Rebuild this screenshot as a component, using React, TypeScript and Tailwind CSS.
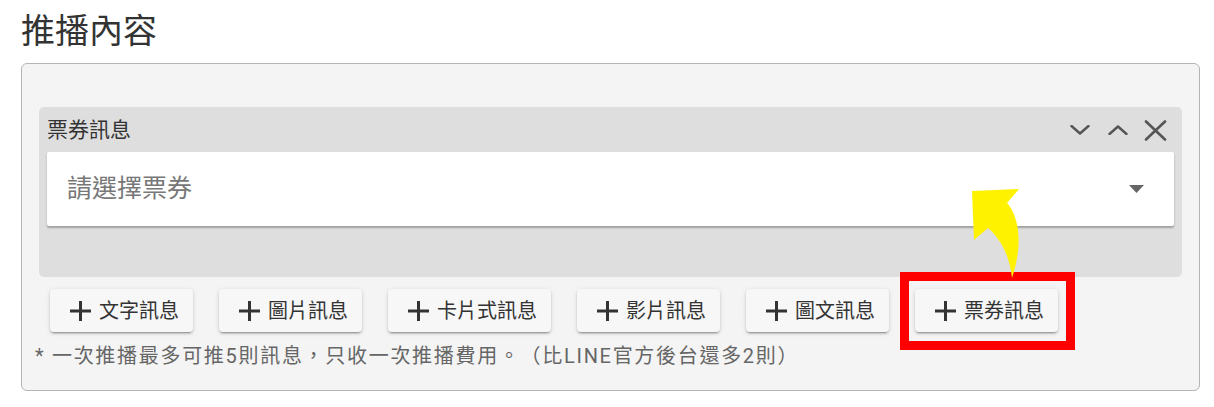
import { ReactNode } from 'react';

const font = "font-['Roboto','Noto_Sans_CJK_TC',sans-serif]";

function ChevronIcon({ up }: { up?: boolean }) {
    return (
        <svg width="20" height="10" viewBox="0 0 20 10" fill="none" stroke="#555" strokeWidth="2.4" strokeLinecap="round" strokeLinejoin="round">
            {up ? <polyline points="1.5,9 10,1.5 18.5,9" /> : <polyline points="1.5,1 10,8.5 18.5,1" />}
        </svg>
    );
}

function CloseIcon() {
    return (
        <svg width="23" height="21" viewBox="0 0 23 21" fill="none" stroke="#555" strokeWidth="2.6" strokeLinecap="round">
            <line x1="2" y1="1.5" x2="21" y2="19.5" />
            <line x1="21" y1="1.5" x2="2" y2="19.5" />
        </svg>
    );
}

function PlusIcon() {
    return (
        <svg width="21" height="20" viewBox="0 0 21 20" fill="none" stroke="#333" strokeWidth="3">
            <line x1="0" y1="10" x2="21" y2="10" />
            <line x1="10.5" y1="0" x2="10.5" y2="20" />
        </svg>
    );
}

function AddButton({ label, highlight }: { label: string; highlight?: boolean }) {
    return (
        <div className="relative">
            <button className="h-[43px] flex items-center gap-[8px] pl-[20px] pr-[14px] rounded-[4px] bg-[#f7f7f7] text-[20px] leading-none text-[#333] shadow-[0_3px_1px_-2px_rgba(0,0,0,0.2),0_2px_2px_0_rgba(0,0,0,0.14),0_1px_5px_0_rgba(0,0,0,0.12)]">
                <PlusIcon />
                <span>{label}</span>
            </button>
            {highlight && (
                <div className="absolute -left-[15px] -top-[17px] -right-[17px] -bottom-[18px] border-[9px] border-[#ff0000] pointer-events-none" />
            )}
        </div>
    );
}

function Panel({ children }: { children: ReactNode }) {
    return (
        <div className="ml-[21px] mr-[14px] border-[1.5px] border-[#b4b4b4] rounded-[6px] bg-[#f4f4f4] pt-[43px] pb-[22px]">
            {children}
        </div>
    );
}

export default function App() {
    const buttons = ['文字訊息', '圖片訊息', '卡片式訊息', '影片訊息', '圖文訊息', '票券訊息'];

    return (
        <div className={`relative w-[1214px] h-[407px] bg-white overflow-hidden ${font}`}>
            <div className="h-[63px] pt-[11px] pl-[21px]">
                <h1 className="text-[34px] leading-[40px] text-[#333] font-normal">推播內容</h1>
            </div>

            <Panel>
                {/* ticket message card */}
                <div className="mx-[17px] rounded-[5px] bg-[#dedede] px-[8px] pt-[9px] pb-[51px]">
                    <div className="h-[28px] flex items-center justify-between mb-[8px]">
                        <span className="text-[21px] leading-[28px] text-[#333]">票券訊息</span>
                        <div className="flex items-center pr-[7px]">
                            <ChevronIcon />
                            <span className="ml-[18px]"><ChevronIcon up /></span>
                            <span className="ml-[16px]"><CloseIcon /></span>
                        </div>
                    </div>
                    <div className="h-[74px] bg-white rounded-[2px] shadow-[0_2px_2px_rgba(0,0,0,0.28)] flex items-center justify-between pl-[20px] pr-[30px]">
                        <span className="text-[25px] text-[#777]">請選擇票券</span>
                        <svg width="15" height="8" viewBox="0 0 15 8">
                            <polygon points="0,0 15,0 7.5,8" fill="#666" />
                        </svg>
                    </div>
                </div>

                <div className="flex gap-[26px] ml-[28px] mt-[12px]">
                    {buttons.map((b, i) => (
                        <AddButton key={b} label={b} highlight={i === buttons.length - 1} />
                    ))}
                </div>

                <p className="ml-[13px] mt-[12px] text-[20px] leading-[24px] tracking-[1.7px] [text-spacing-trim:space-all] text-[#666]">
                    * 一次推播最多可推5則訊息，只收一次推播費用。（比LINE官方後台還多2則）
                </p>
            </Panel>

            {/* yellow annotation arrow */}
            <svg className="absolute inset-0 pointer-events-none" width="1214" height="407" viewBox="0 0 1214 407">
                <path d="M972,191 L1019,189 L1007,203 C1018,215 1024,242 1012,278 C1010,258 1002,240 988,228 L974,240 Z" fill="#fff200" />
            </svg>
        </div>
    );
}
